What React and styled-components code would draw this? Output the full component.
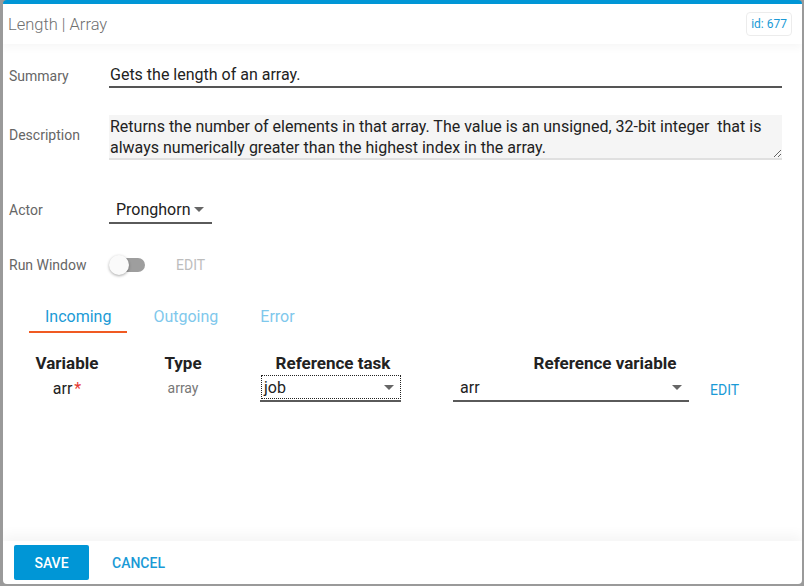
import React from 'react';
import styled, { createGlobalStyle } from 'styled-components';

const Global = createGlobalStyle`
  html, body {
    margin: 0;
    padding: 0;
    background: #9a9a9a;
    font-family: Roboto, "Liberation Sans", sans-serif;
  }
  * { box-sizing: border-box; }
`;

const Dialog = styled.div`
  width: 799px;
  height: 584px;
  margin-left: 3px;
  background: #fff;
  border-top: 4px solid #0096d6;
  border-radius: 4px;
  display: flex;
  flex-direction: column;
  overflow: hidden;
`;

const Header = styled.div`
  height: 40px;
  display: flex;
  align-items: center;
  justify-content: space-between;
  padding: 0 10px 0 5px;
  box-shadow: 0 4px 8px rgba(0, 0, 0, 0.035);
  position: relative;
  z-index: 1;
`;

const Title = styled.div`
  font-size: 16.5px;
  font-weight: 300;
  color: #707070;
`;

const IdBadge = styled.div`
  font-size: 12px;
  color: #1a9ad6;
  border: 1px solid #ececec;
  border-radius: 4px;
  padding: 4px 4px;
  line-height: 14px;
`;

const Body = styled.div`
  flex: 1;
  padding-top: 16px;
`;

const Field = styled.div`
  display: flex;
  align-items: center;
  padding-left: 6px;
  margin-top: ${(p) => p.gap || 0}px;
`;

const Label = styled.div`
  width: 100px;
  font-size: 14px;
  color: #666;
  margin-top: ${(p) => p.shift || 0}px;
`;

const TextInput = styled.input`
  width: 673px;
  height: 28px;
  border: none;
  border-bottom: 2px solid #555;
  padding: 2px 1px 0;
  font-family: inherit;
  font-size: 16px;
  color: #222;
  outline: none;
  background: transparent;
`;

const TextArea = styled.textarea`
  width: 673px;
  height: 45px;
  border: none;
  border-bottom: 2px solid #e0e0e0;
  background: #f5f5f5;
  padding: 1px 1px;
  font-family: inherit;
  font-size: 16px;
  line-height: 21px;
  color: #222;
  outline: none;
  resize: vertical;
  overflow: hidden;
`;

const Select = styled.div`
  display: flex;
  align-items: center;
  justify-content: space-between;
  flex-shrink: 0;
  width: ${(p) => p.w}px;
  height: 28px;
  border-bottom: 2px solid #5a5a5a;
  font-size: 16px;
  color: #222;
  padding: 0 ${(p) => p.pr || 4}px 0 ${(p) => p.pl || 7}px;
`;

const Focus = styled.div`
  flex: 1;
  display: flex;
  align-items: center;
  justify-content: space-between;
  height: 22px;
  outline: 1px dotted #222;
  padding: 0 6px 0 2px;
`;

const Caret = styled.span`
  width: 0;
  height: 0;
  border-left: 5px solid transparent;
  border-right: 5px solid transparent;
  border-top: 5px solid #666;
  margin-left: ${(p) => p.ml || 0}px;
`;

const Toggle = styled.div`
  position: relative;
  width: 36px;
  height: 20px;
  display: flex;
  align-items: center;
`;

const Track = styled.div`
  margin-left: 6px;
  width: 30px;
  height: 14px;
  border-radius: 7px;
  background: #9e9e9e;
`;

const Thumb = styled.div`
  position: absolute;
  left: 0;
  top: 0;
  width: 20px;
  height: 20px;
  border-radius: 50%;
  background: #fafafa;
  box-shadow: 0 1px 3px rgba(0, 0, 0, 0.35);
`;

const FlatLink = styled.span`
  font-size: ${(p) => p.size || 14}px;
  color: ${(p) => (p.disabled ? '#bdbdbd' : '#1a9ad6')};
  text-transform: uppercase;
  margin-left: ${(p) => p.ml || 0}px;
  margin-top: ${(p) => p.mt || 0}px;
`;

const Tabs = styled.div`
  display: flex;
  gap: 10px;
  margin: 26px 0 0 26px;
`;

const Tab = styled.div`
  padding: 0 16px;
  height: 32px;
  display: flex;
  align-items: center;
  font-size: 16px;
  color: ${(p) => (p.active ? '#1a9ad6' : '#7fc8ec')};
  border-bottom: 2px solid ${(p) => (p.active ? '#f05a22' : 'transparent')};
`;

const Table = styled.div`
  display: grid;
  grid-template-columns: 88px 144px 156px 346px;
  margin: 19px 0 0 20px;
`;

const Th = styled.div`
  font-size: 17px;
  font-weight: 700;
  color: #222;
  text-align: center;
  height: 22px;
  line-height: 22px;
  padding-left: ${(p) => p.pl || 0}px;
`;

const Td = styled.div`
  display: flex;
  align-items: center;
  justify-content: ${(p) => (p.left ? 'flex-start' : 'center')};
  height: 28px;
  padding-left: ${(p) => p.pl || 0}px;
  font-size: ${(p) => p.size || 16}px;
  color: ${(p) => p.color || '#222'};
`;

const Star = styled.span`
  color: #e53935;
  margin-left: 2px;
`;

const Footer = styled.div`
  height: 43px;
  display: flex;
  align-items: center;
  padding-left: 11px;
  box-shadow: 0 -6px 12px rgba(0, 0, 0, 0.045);
`;

const SaveButton = styled.button`
  width: 75px;
  height: 35px;
  border: none;
  border-radius: 2px;
  background: #0096d6;
  color: #fff;
  font-family: inherit;
  font-size: 14px;
  font-weight: 500;
`;

const CancelButton = styled.button`
  border: none;
  background: none;
  margin-left: 15px;
  padding: 0 8px;
  color: #1a9ad6;
  font-family: inherit;
  font-size: 14px;
  font-weight: 500;
`;

export default function App() {
  return (
    <>
      <Global />
      <Dialog>
        <Header>
          <Title>Length | Array</Title>
          <IdBadge>id: 677</IdBadge>
        </Header>
        <Body>
          <Field>
            <Label shift={3}>Summary</Label>
            <TextInput readOnly value="Gets the length of an array." />
          </Field>
          <Field gap={27}>
            <Label shift={-6}>Description</Label>
            <TextArea
              readOnly
              value="Returns the number of elements in that array. The value is an unsigned, 32-bit integer  that is always numerically greater than the highest index in the array."
            />
          </Field>
          <Field gap={36}>
            <Label>Actor</Label>
            <Select w={103} pr={8}>
              Pronghorn
              <Caret ml={2} />
            </Select>
          </Field>
          <Field gap={31}>
            <Label>Run Window</Label>
            <Toggle>
              <Track />
              <Thumb />
            </Toggle>
            <FlatLink disabled ml={31}>Edit</FlatLink>
          </Field>
          <Tabs>
            <Tab active>Incoming</Tab>
            <Tab>Outgoing</Tab>
            <Tab>Error</Tab>
          </Tabs>
          <Table>
            <Th>Variable</Th>
            <Th>Type</Th>
            <Th>Reference task</Th>
            <Th pl={42}>Reference variable</Th>
            <Td>
              arr<Star>*</Star>
            </Td>
            <Td size={14} color="#777">array</Td>
            <Td left pl={5}>
              <Select w={141} pl={2} pr={1}>
                <Focus>
                  job
                  <Caret />
                </Focus>
              </Select>
            </Td>
            <Td left pl={42}>
              <Select w={236} pl={7} pr={7}>
                arr
                <Caret />
              </Select>
              <FlatLink ml={21} mt={4}>Edit</FlatLink>
            </Td>
          </Table>
        </Body>
        <Footer>
          <SaveButton>SAVE</SaveButton>
          <CancelButton>CANCEL</CancelButton>
        </Footer>
      </Dialog>
    </>
  );
}
